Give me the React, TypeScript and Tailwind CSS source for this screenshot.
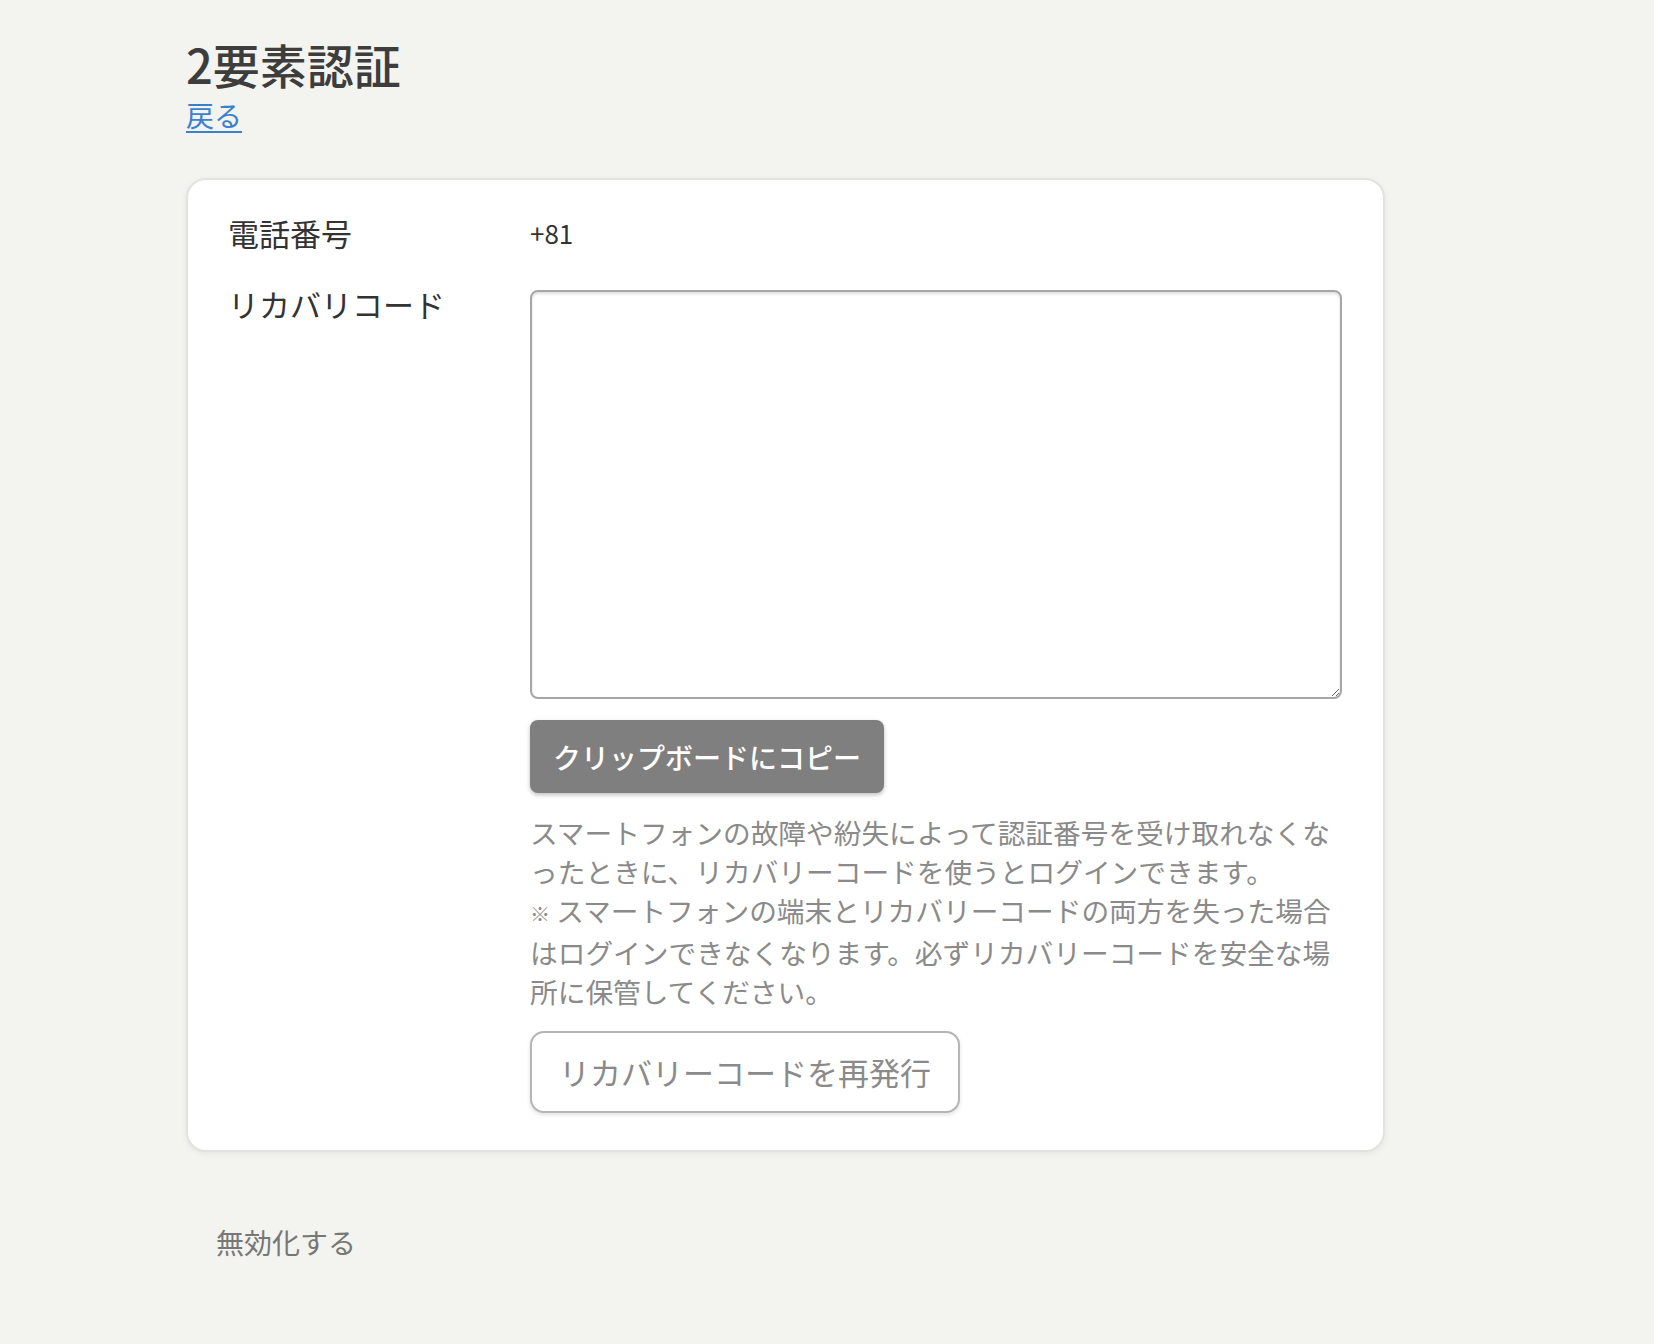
import React from 'react';

// 2要素認証 設定ページ
export default function App() {
  return (
    <div className="min-h-[1344px] bg-[#f3f3ef] pl-[186px] pt-[39px] font-['Noto_Sans_CJK_JP',sans-serif] text-[#333]">
      <h1 className="text-[47px] leading-[50px] font-medium text-[#3d3d3d]">2要素認証</h1>
      <a href="#" className="mt-[9px] inline-block text-[28px] leading-[34px] text-[#3a7fd0] underline underline-offset-4">
        戻る
      </a>

      <div className="mt-[46px] w-[1199px] rounded-[20px] border-2 border-[#e2e2e0] bg-white px-[40px] pt-[33px] pb-[37px] shadow-[0_2px_6px_rgba(0,0,0,0.06)]">
        <div className="grid grid-cols-[302px_812px] gap-y-[37px]">
          <div className="text-[31px] leading-[40px] font-normal text-[#333]">電話番号</div>
          <div className="text-[26px] leading-[40px] font-normal">+81</div>

          <div className="-mt-[6px] text-[31px] leading-[40px] font-normal text-[#333]">リカバリコード</div>
          <div className="flex flex-col items-start">
            <textarea className="block h-[409px] w-[812px] rounded-[8px] border-2 border-[#a6a6a6] bg-white shadow-[inset_0_2px_3px_rgba(0,0,0,0.12)] outline-none" />
            <button className="mt-[21px] h-[73px] rounded-[8px] bg-[#7f7f7f] px-[23px] text-[28px] font-medium text-white shadow-[0_2px_4px_rgba(0,0,0,0.25)]">
              クリップボードにコピー
            </button>
            <p className="mt-[20px] text-[27.7px] leading-[39px] text-[#8a8a8a]">
              スマートフォンの故障や紛失によって認証番号を受け取れなくな
              <br />
              ったときに、リカバリーコードを使うとログインできます。
              <br />
              <span className="text-[20px]">※</span> スマートフォンの端末とリカバリーコードの両方を失った場合
              <br />
              はログインできなくなります。必ずリカバリーコードを安全な場
              <br />
              所に保管してください。
            </p>
            <button className="mt-[20px] h-[82px] rounded-[14px] border-2 border-[#b5b5b5] bg-white px-[27px] text-[31px] text-[#8a8a8a] shadow-[0_2px_4px_rgba(0,0,0,0.12)]">
              リカバリーコードを再発行
            </button>
          </div>
        </div>
      </div>

      <div className="mt-[70px] pl-[30px] text-[28px] leading-[40px] text-[#777]">無効化する</div>
    </div>
  );
}
